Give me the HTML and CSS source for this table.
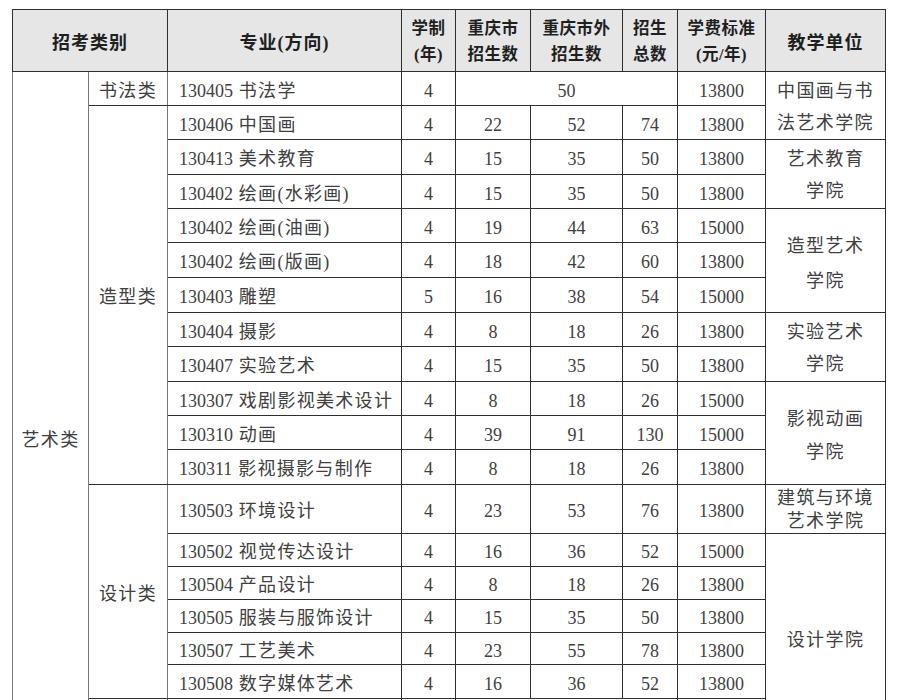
FILE: index.html
```html
<!DOCTYPE html>
<html lang="zh-CN">
<head>
<meta charset="utf-8">
<title>招生计划</title>
<link rel="stylesheet" href="styles.css">
</head>
<body>
<table class="plan">
  <colgroup>
    <col class="w1"><col class="w2"><col class="w3"><col class="w4"><col class="w5"><col class="w6"><col class="w7"><col class="w8"><col class="w9">
  </colgroup>
  <thead>
    <tr class="h62">
      <th colspan="2" class="cj">招考类别</th>
      <th class="cj">专业(方向)</th>
      <th class="two">学制<br>(年)</th>
      <th class="two">重庆市<br>招生数</th>
      <th class="two">重庆市外<br>招生数</th>
      <th class="two">招生<br>总数</th>
      <th class="two">学费标准<br>(元/年)</th>
      <th class="cj">教学单位</th>
    </tr>
  </thead>
  <tbody>
    <tr class="h34">
      <td rowspan="20" class="cat">艺术类</td>
      <td class="cat">书法类</td>
      <td class="major"><span class="code">130405</span> 书法学</td>
      <td>4</td>
      <td colspan="3">50</td>
      <td>13800</td>
      <td rowspan="2" class="unit u2">中国画与书<br>法艺术学院</td>
    </tr>
    <tr class="h34">
      <td rowspan="11" class="cat">造型类</td>
      <td class="major"><span class="code">130406</span> 中国画</td>
      <td>4</td><td>22</td><td>52</td><td>74</td><td>13800</td>
    </tr>
    <tr class="h35">
      <td class="major"><span class="code">130413</span> 美术教育</td>
      <td>4</td><td>15</td><td>35</td><td>50</td><td>13800</td>
      <td rowspan="2" class="unit u2">艺术教育<br>学院</td>
    </tr>
    <tr class="h34">
      <td class="major"><span class="code">130402</span> 绘画(水彩画)</td>
      <td>4</td><td>15</td><td>35</td><td>50</td><td>13800</td>
    </tr>
    <tr class="h34">
      <td class="major"><span class="code">130402</span> 绘画(油画)</td>
      <td>4</td><td>19</td><td>44</td><td>63</td><td>15000</td>
      <td rowspan="3" class="unit u3">造型艺术<br>学院</td>
    </tr>
    <tr class="h35">
      <td class="major"><span class="code">130402</span> 绘画(版画)</td>
      <td>4</td><td>18</td><td>42</td><td>60</td><td>13800</td>
    </tr>
    <tr class="h35">
      <td class="major"><span class="code">130403</span> 雕塑</td>
      <td>5</td><td>16</td><td>38</td><td>54</td><td>15000</td>
    </tr>
    <tr class="h34">
      <td class="major"><span class="code">130404</span> 摄影</td>
      <td>4</td><td>8</td><td>18</td><td>26</td><td>13800</td>
      <td rowspan="2" class="unit u2">实验艺术<br>学院</td>
    </tr>
    <tr class="h35">
      <td class="major"><span class="code">130407</span> 实验艺术</td>
      <td>4</td><td>15</td><td>35</td><td>50</td><td>13800</td>
    </tr>
    <tr class="h34">
      <td class="major"><span class="code">130307</span> 戏剧影视美术设计</td>
      <td>4</td><td>8</td><td>18</td><td>26</td><td>15000</td>
      <td rowspan="3" class="unit u3b">影视动画<br>学院</td>
    </tr>
    <tr class="h34">
      <td class="major"><span class="code">130310</span> 动画</td>
      <td>4</td><td>39</td><td>91</td><td>130</td><td>15000</td>
    </tr>
    <tr class="h35">
      <td class="major"><span class="code">130311</span> 影视摄影与制作</td>
      <td>4</td><td>8</td><td>18</td><td>26</td><td>13800</td>
    </tr>
    <tr class="h49">
      <td rowspan="6" class="cat">设计类</td>
      <td class="major"><span class="code">130503</span> 环境设计</td>
      <td>4</td><td>23</td><td>53</td><td>76</td><td>13800</td>
      <td class="unit u24">建筑与环境<br>艺术学院</td>
    </tr>
    <tr class="h33">
      <td class="major"><span class="code">130502</span> 视觉传达设计</td>
      <td>4</td><td>16</td><td>36</td><td>52</td><td>15000</td>
      <td rowspan="6" class="unit">设计学院</td>
    </tr>
    <tr class="h33">
      <td class="major"><span class="code">130504</span> 产品设计</td>
      <td>4</td><td>8</td><td>18</td><td>26</td><td>13800</td>
    </tr>
    <tr class="h33">
      <td class="major"><span class="code">130505</span> 服装与服饰设计</td>
      <td>4</td><td>15</td><td>35</td><td>50</td><td>13800</td>
    </tr>
    <tr class="h32">
      <td class="major"><span class="code">130507</span> 工艺美术</td>
      <td>4</td><td>23</td><td>55</td><td>78</td><td>13800</td>
    </tr>
    <tr class="h34">
      <td class="major"><span class="code">130508</span> 数字媒体艺术</td>
      <td>4</td><td>16</td><td>36</td><td>52</td><td>13800</td>
    </tr>
    <tr class="h43">
      <td class="cat"></td>
      <td class="major"></td>
      <td></td>
      <td colspan="3"></td>
      <td></td>
    </tr>
    <tr class="h62">
      <td class="cat"></td>
      <td class="major"></td>
      <td></td>
      <td colspan="3"></td>
      <td></td>
      <td class="unit"></td>
    </tr>
  </tbody>
</table>
</body>
</html>
```

FILE: styles.css
```css
html, body {
  margin: 0;
  padding: 0;
  background: #ffffff;
}

body {
  padding: 9px 0 0 12px;
}

.plan {
  border-collapse: collapse;
  table-layout: fixed;
  width: 874px;
  font-family: "Liberation Serif", "Noto Sans CJK SC", serif;
  font-size: 18px;
  color: #404040;
  border: 1px solid #444444;
}

.w1 { width: 76px; }
.w2 { width: 79px; }
.w3 { width: 234px; }
.w4 { width: 54px; }
.w5 { width: 75px; }
.w6 { width: 92px; }
.w7 { width: 55px; }
.w8 { width: 88px; }
.w9 { width: 120px; }

.plan th,
.plan td {
  border: 1px solid #2e2e2e;
  padding: 4px 0 0 0;
  text-align: center;
  vertical-align: middle;
  line-height: 20px;
  white-space: nowrap;
  overflow: hidden;
}

.plan th {
  background: #e6e6e6;
  font-weight: 700;
  color: #1f1f1f;
  font-size: 18px;
  letter-spacing: 1px;
}

.plan th.two {
  font-size: 16.5px;
  line-height: 26px;
  letter-spacing: 0.5px;
  padding-top: 2px;
}

.plan td.cat {
  border-left-color: #777777;
  border-right-color: #777777;
  letter-spacing: 1.4px;
}

.plan td.major {
  text-align: left;
  padding-left: 11px;
  letter-spacing: 1.3px;
}

.code {
  letter-spacing: 0;
}

.plan td.unit {
  letter-spacing: 1.4px;
}

.plan td.u2 {
  line-height: 32px;
  padding-top: 2px;
}

.plan td.u3 {
  line-height: 35px;
  padding-top: 6px;
}

.plan td.u3b {
  line-height: 33px;
  padding-top: 6px;
}

.plan td.u24 {
  line-height: 23px;
  padding-top: 1px;
}

.h32 { height: 32px; }
.h33 { height: 33px; }
.h34 { height: 34px; }
.h35 { height: 35px; }
.h43 { height: 43px; }
.h49 { height: 49px; }
.h62 { height: 62px; }
```
